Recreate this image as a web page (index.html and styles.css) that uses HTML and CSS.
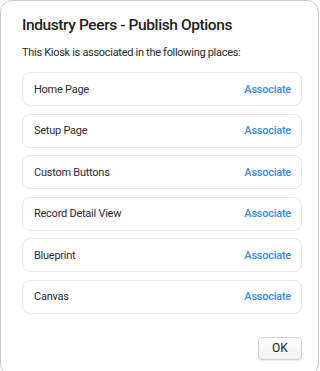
FILE: index.html
```html
<!DOCTYPE html>
<html>
<head>
<meta charset="utf-8">
<link rel="stylesheet" href="styles.css">
</head>
<body>
<div class="dialog">
  <h1 class="title">Industry Peers - Publish Options</h1>
  <p class="subtitle">This Kiosk is associated in the following places:</p>
  <ul class="list">
    <li class="row"><span class="name">Home Page</span><a class="assoc">Associate</a></li>
    <li class="row"><span class="name">Setup Page</span><a class="assoc">Associate</a></li>
    <li class="row"><span class="name">Custom Buttons</span><a class="assoc">Associate</a></li>
    <li class="row"><span class="name">Record Detail View</span><a class="assoc">Associate</a></li>
    <li class="row"><span class="name">Blueprint</span><a class="assoc">Associate</a></li>
    <li class="row"><span class="name">Canvas</span><a class="assoc">Associate</a></li>
  </ul>
  <div class="footer"><button class="ok">OK</button></div>
</div>
</body>
</html>
```
FILE: styles.css
```css
* { box-sizing: border-box; }
html, body { margin: 0; padding: 0; background: #fff; }
body { font-family: Roboto, "Noto Sans", sans-serif; color: #2a2a2a; overflow: hidden; }
.dialog {
  width: 319px;
  height: 376px;
  border: 1px solid #c9c9c9;
  border-radius: 12px;
  padding: 13px 16px 0 21px;
  background: #fff;
}
.title {
  margin: 0;
  font-size: 15.5px;
  font-weight: 500;
  line-height: 22px;
  color: #1f1f1f;
  letter-spacing: -0.4px;
}
.subtitle {
  margin: 9px 0 0;
  font-size: 11px;
  line-height: 16px;
  color: #2a2a2a;
  letter-spacing: -0.3px;
}
.list {
  list-style: none;
  margin: 11px 0 0;
  padding: 0;
  display: flex;
  flex-direction: column;
  gap: 7.6px;
}
.row {
  height: 34px;
  border: 1px solid #e2e8f0;
  border-radius: 8px;
  display: flex;
  align-items: center;
  justify-content: space-between;
  padding: 0 10px 0 11px;
  font-size: 11px;
  letter-spacing: -0.25px;
}
.name { color: #2c2c2c; }
.assoc { color: #3a8cf0; font-weight: 500; }
.footer {
  display: flex;
  justify-content: flex-end;
  margin-top: 23px;
}
.ok {
  width: 44px;
  height: 23px;
  border: 1px solid #cfd3d8;
  border-radius: 4px;
  background: linear-gradient(#ffffff, #eef0f3);
  font-family: Roboto, sans-serif;
  font-size: 12px;
  color: #222;
  padding: 0;
  box-shadow: 0 1px 1px rgba(0,0,0,0.08);
}
```
